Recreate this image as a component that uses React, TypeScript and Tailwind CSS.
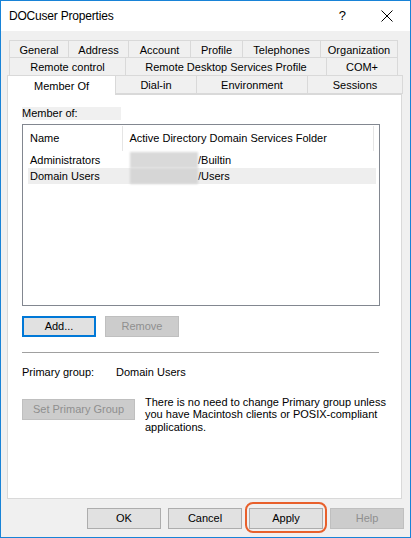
import React from "react";

const font = { fontFamily: '"Liberation Sans", Arial, sans-serif' };

const Tab = ({ label, w }: { label: string; w: string }) => (
  <div
    className={`${w} h-full flex items-center justify-center pt-[2px] border border-[#d9d9d9] -ml-px first:ml-0 bg-[#f0f0f0] text-[11px] text-black`}
  >
    {label}
  </div>
);

const Button = ({
  label,
  w,
  disabled,
  focused,
}: {
  label: string;
  w: string;
  disabled?: boolean;
  focused?: boolean;
}) => (
  <div
    className={`${w} h-[21px] flex items-center justify-center text-[11px] ${
      disabled
        ? "bg-[#cccccc] border border-[#bfbfbf] text-[#8f8f8f]"
        : focused
        ? "bg-[#e1e1e1] border-2 border-[#0078d7] text-black"
        : "bg-[#e1e1e1] border border-[#adadad] text-black"
    }`}
  >
    {label}
  </div>
);

export default function App() {
  return (
    <div
      style={font}
      className="w-[411px] h-[538px] border border-[#1883d7] flex flex-col bg-[#f0f0f0] overflow-hidden"
    >
      {/* title bar */}
      <div className="h-[30px] bg-white flex items-center shrink-0">
        <span className="ml-[8px] text-[12px] text-black tracking-[-0.2px]">DOCuser Properties</span>
        <span className="ml-auto mr-[35px] text-[13px] text-black">?</span>
        <svg width="12" height="12" viewBox="0 0 12 12" className="mr-[17px]">
          <path d="M0.5 0.5 L11.5 11.5 M11.5 0.5 L0.5 11.5" stroke="#000" strokeWidth="1" />
        </svg>
      </div>

      {/* tabs */}
      <div className="pt-[9px] flex flex-col">
        <div className="flex h-[18px] ml-[8px]">
          <Tab label="General" w="w-[60px]" />
          <Tab label="Address" w="w-[61px]" />
          <Tab label="Account" w="w-[63px]" />
          <Tab label="Profile" w="w-[53px]" />
          <Tab label="Telephones" w="w-[79px]" />
          <Tab label="Organization" w="w-[78px]" />
        </div>
        <div className="flex h-[19px] ml-[8px] -mt-px">
          <Tab label="Remote control" w="w-[117px]" />
          <Tab label="Remote Desktop Services Profile" w="w-[202px]" />
          <Tab label="COM+" w="w-[72px]" />
        </div>
        <div className="flex h-[19px] ml-[6px] -mt-px items-end">
          <div className="w-[109px] h-[20px] bg-white border border-b-0 border-[#d9d9d9] flex items-center justify-center pt-[1px] text-[11px] text-black relative z-10 -mb-px">
            Member Of
          </div>
          <Tab label="Dial-in" w="w-[82px]" />
          <Tab label="Environment" w="w-[112px]" />
          <Tab label="Sessions" w="w-[96px]" />
        </div>
      </div>

      {/* panel */}
      <div className="ml-[6px] w-[395px] h-[405px] bg-white border border-[#d9d9d9] flex flex-col pl-[14px]">
        <div className="mt-[12px] w-[99px] h-[13px] bg-[#f0f0f0] text-[11px] leading-[13px] text-black">
          Member of:
        </div>
        <div className="mt-[4px] w-[358px] h-[182px] border border-[#828790] flex flex-col pt-px px-[5px]">
          <div className="h-[25px] flex items-center text-[11px] text-black">
            <span className="w-[95px] pl-[2px]">Name</span>
            <span className="h-full border-l border-[#e5e5e5] pl-[6px] flex items-center w-[253px] border-r">
              Active Directory Domain Services Folder
            </span>
          </div>
          <div className="mt-[1px] h-[16px] flex items-center text-[11px] text-black">
            <span className="w-[102px] pl-[2px]">Administrators</span>
            <span className="w-[68px] h-full bg-[#d9d9d9] blur-[1px]" />
            <span>/Builtin</span>
          </div>
          <div className="h-[16px] flex items-center text-[11px] text-black bg-[#eeeeee] w-[348px]">
            <span className="w-[102px] pl-[2px]">Domain Users</span>
            <span className="w-[68px] h-full bg-[#d6d6d6] blur-[1px]" />
            <span>/Users</span>
          </div>
        </div>
        <div className="mt-[10px] flex gap-[9px]">
          <Button label="Add..." w="w-[74px]" focused />
          <Button label="Remove" w="w-[74px]" disabled />
        </div>
        <div className="mt-[15px] w-[357px] h-px bg-[#a0a0a0]" />
        <div className="mt-[11px] flex text-[11px] text-black">
          <span className="w-[94px]">Primary group:</span>
          <span>Domain Users</span>
        </div>
        <div className="mt-[13px] flex items-start">
          <div className="mt-[5px]">
            <Button label="Set Primary Group" w="w-[113px]" disabled />
          </div>
          <p className="ml-[10px] mt-[2px] w-[250px] text-[11px] leading-[12.5px] text-black">
            There is no need to change Primary group unless you have Macintosh clients or POSIX-compliant applications.
          </p>
        </div>
      </div>

      {/* footer */}
      <div className="flex justify-end gap-[7px] mt-[9px] mr-[6px]">
        <Button label="OK" w="w-[74px]" />
        <Button label="Cancel" w="w-[74px]" />
        <div className="relative">
          <Button label="Apply" w="w-[74px]" />
          <div className="absolute -left-[4px] -top-[6px] w-[82px] h-[31px] border-2 border-[#e8602c] rounded-[8px]" />
        </div>
        <Button label="Help" w="w-[74px]" disabled />
      </div>
    </div>
  );
}
